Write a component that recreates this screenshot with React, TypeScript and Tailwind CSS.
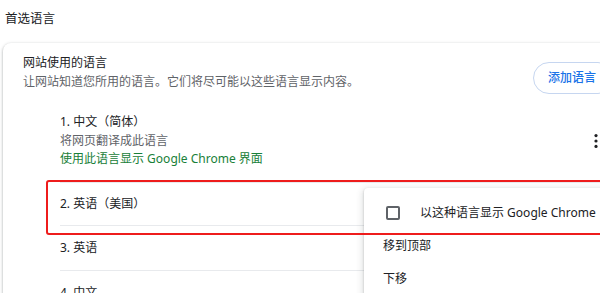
const font = "font-['Noto_Sans','Noto_Sans_CJK_SC',sans-serif]"

function MoreIcon() {
  return (
    <svg width="16" height="16" viewBox="0 0 16 16" className="text-[#202124]">
      <circle cx="8" cy="2.6" r="1.6" fill="currentColor" />
      <circle cx="8" cy="8" r="1.6" fill="currentColor" />
      <circle cx="8" cy="13.4" r="1.6" fill="currentColor" />
    </svg>
  )
}

export default function App() {
  return (
    <div className={`relative w-[600px] h-[293px] overflow-hidden bg-white ${font} text-[12px] text-[#202124]`}>
      <div className="pt-[10px] pl-[5px] h-[43px] text-[12.5px] leading-[18px]">首选语言</div>

      <div className="ml-[3px] w-[631px] rounded-lg bg-white shadow-[0_1px_2px_rgba(60,64,67,0.3),0_1px_3px_1px_rgba(60,64,67,0.15)] pl-[20px] pr-[20px]">
        <div className="flex items-start h-[57px] pt-[10px]">
          <div className="leading-[19px]">
            <div>网站使用的语言</div>
            <div className="text-[#5f6368]">让网站知道您所用的语言。它们将尽可能以这些语言显示内容。</div>
          </div>
          <button className="ml-auto mt-[9px] h-[32px] w-[81px] rounded-full border border-[#c6d6f0] text-left pl-[14px] text-[#1a73e8] font-medium">
            添加语言
          </button>
        </div>

        <div className="ml-[37px] mr-[10px]">
          <div className="flex items-center h-[82px] leading-[18.5px]">
            <div>
              <div>1. 中文（简体）</div>
              <div className="text-[#5f6368]">将网页翻译成此语言</div>
              <div className="text-[#188038]">使用此语言显示 Google Chrome 界面</div>
            </div>
            <div className="ml-auto">
              <MoreIcon />
            </div>
          </div>
          <div className="flex items-center h-[43px] border-t border-[#e8eaed]">2. 英语（美国）</div>
          <div className="flex items-center h-[45px] border-t border-[#e8eaed]">3. 英语</div>
          <div className="flex items-center h-[44px] border-t border-[#e8eaed]">4. 中文</div>
        </div>
      </div>

      <div className="absolute left-[364px] top-[188px] w-[260px] h-[140px] rounded-[4px] bg-white pt-[8px] shadow-[0_2px_6px_2px_rgba(60,64,67,0.15),0_1px_2px_rgba(60,64,67,0.3)]">
        <div className="flex items-center h-[33px] pl-[22px]">
          <span className="w-[14px] h-[14px] border-2 border-[#5f6368] rounded-[2px]" />
          <span className="ml-[20px]">以这种语言显示 Google Chrome</span>
        </div>
        <div className="flex items-center h-[33px] pl-[19px]">移到顶部</div>
        <div className="flex items-center h-[33px] pl-[19px]">下移</div>
      </div>

      <div className="absolute left-[46px] top-[180px] w-[600px] h-[55px] border-2 border-[#ee1c1c] rounded-[3px]" />
    </div>
  )
}
